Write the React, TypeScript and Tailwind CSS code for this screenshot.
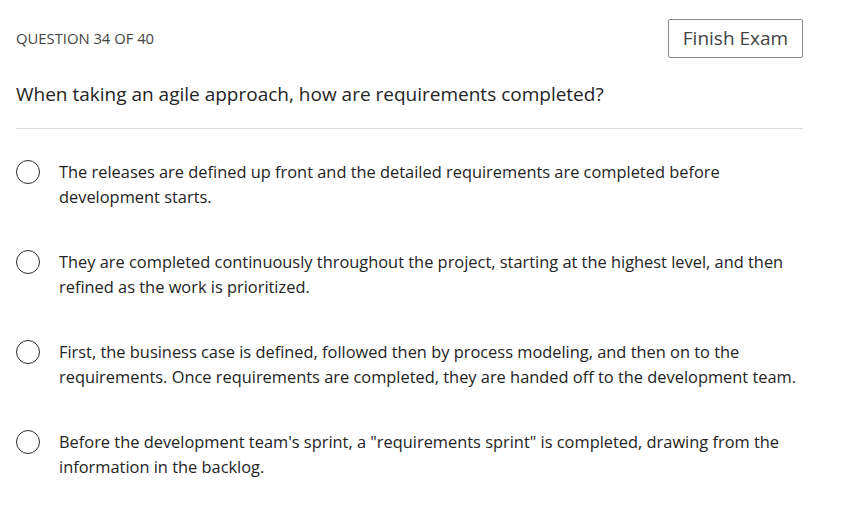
import React from "react";

const options = [
  "The releases are defined up front and the detailed requirements are completed before development starts.",
  "They are completed continuously throughout the project, starting at the highest level, and then refined as the work is prioritized.",
  "First, the business case is defined, followed then by process modeling, and then on to the requirements. Once requirements are completed, they are handed off to the development team.",
  "Before the development team's sprint, a \"requirements sprint\" is completed, drawing from the information in the backlog.",
];

const App = () => {
  return (
    <div className="w-[850px] h-[506px] bg-white font-['Open_Sans',sans-serif] text-[#242424]">
      <div className="w-[787px] ml-4 pt-[19px]">
        <div className="flex items-center justify-between">
          <span className="text-[14.8px] text-[#444]">QUESTION 34 OF 40</span>
          <button className="h-[39px] w-[135px] border border-[#8a8a8a] rounded-[2px] text-[19px] text-[#444]">
            Finish Exam
          </button>
        </div>
        <h1 className="mt-[23px] text-[19px] leading-[26px]">
          When taking an agile approach, how are requirements completed?
        </h1>
        <div className="mt-[21px] h-px bg-[#dcdcdc]" />
        <div className="mt-[30px] w-[800px] flex flex-col gap-[40px]">
          {options.map((text, i) => (
            <label key={i} className="flex items-start gap-[19px] cursor-pointer">
              <span className="mt-[0.5px] w-6 h-6 shrink-0 rounded-full border-[1.5px] border-[#2a2a2a]" />
              <span className="text-[16.4px] leading-[25px]">{text}</span>
            </label>
          ))}
        </div>
      </div>
    </div>
  );
};

export default App;
